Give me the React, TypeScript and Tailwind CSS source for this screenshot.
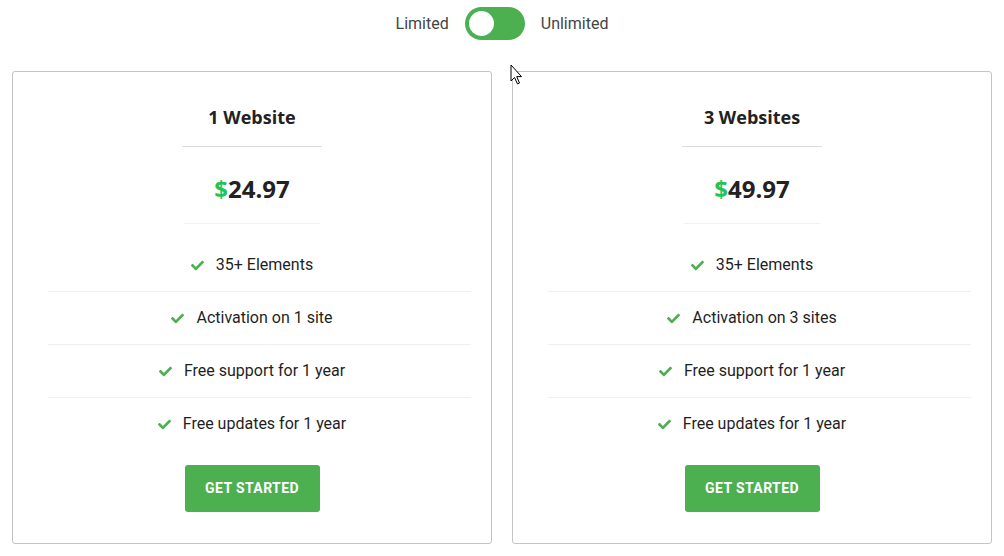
import { FaCheck } from 'react-icons/fa';

type Plan = {
  title: string;
  price: string;
  features: string[];
};

const plans: Plan[] = [
  {
    title: '1 Website',
    price: '24.97',
    features: ['35+ Elements', 'Activation on 1 site', 'Free support for 1 year', 'Free updates for 1 year'],
  },
  {
    title: '3 Websites',
    price: '49.97',
    features: ['35+ Elements', 'Activation on 3 sites', 'Free support for 1 year', 'Free updates for 1 year'],
  },
];

const PlanCard = ({ plan }: { plan: Plan }) => (
  <div className="w-[480px] h-[473px] border border-[#c4c4c4] rounded-[3px] bg-white flex flex-col items-center pt-[33px]">
    <h3 className="h-[25px] leading-[25px] text-[18px] font-bold text-[#222] font-['Open_Sans',sans-serif]">
      {plan.title}
    </h3>
    <div className="mt-[16px] w-[140px] h-px bg-[#dcdcdc]" />
    <div className="mt-[26px] h-[32px] leading-[32px] text-[24px] font-bold text-[#222] font-['Open_Sans',sans-serif]">
      <span className="text-[#1fc55a]">$</span>
      {plan.price}
    </div>
    <div className="mt-[18px] w-[136px] h-px bg-[#f1f1f1]" />
    <ul className="mt-[15px] w-full font-['Roboto',sans-serif]">
      {plan.features.map((feature, i) => (
        <li key={feature} className="flex flex-col">
          <div className="h-[52px] flex items-center justify-center gap-[12px] text-[16px] text-[#1f1f1f]">
            <FaCheck className="text-[#4caf50] w-[13px] h-[13px]" />
            <span>{feature}</span>
          </div>
          {i < plan.features.length - 1 && <div className="ml-[35px] mr-[20px] h-px bg-[#f0f0f0]" />}
        </li>
      ))}
    </ul>
    <button className="mt-[15px] w-[135px] h-[47px] rounded-[3px] bg-[#4caf50] text-white text-[14px] font-bold font-['Roboto',sans-serif] tracking-[0.4px]">
      GET STARTED
    </button>
  </div>
);

export default function App() {
  return (
    <div className="relative w-[1004px] h-[556px] bg-white overflow-hidden">
      <div className="pt-[7px] flex items-center justify-center gap-[16px] font-['Roboto',sans-serif] text-[16px] text-[#444]">
        <span>Limited</span>
        <div className="w-[60px] h-[33px] rounded-full bg-[#4caf50] flex items-center px-[4px]">
          <div className="w-[25px] h-[25px] rounded-full bg-white" />
        </div>
        <span>Unlimited</span>
      </div>
      <div className="mt-[31px] pl-[12px] flex gap-[20px]">
        {plans.map((plan) => (
          <PlanCard key={plan.title} plan={plan} />
        ))}
      </div>
      <svg className="absolute left-[510px] top-[64px]" width="14" height="22" viewBox="0 0 14 22">
        <path d="M1 1 L1 17 L4.5 13.5 L7.5 20 L9.5 19 L6.7 12.6 L11.5 12.6 Z" fill="white" stroke="black" strokeWidth="1" />
      </svg>
    </div>
  );
}
